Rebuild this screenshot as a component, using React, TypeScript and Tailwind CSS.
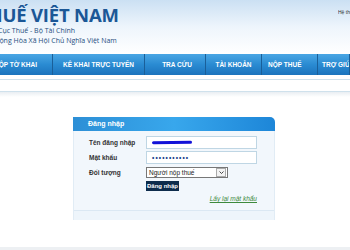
import React from 'react';

const navItems = [
  { label: 'NỘP TỜ KHAI', w: 'w-[53px] justify-end pr-[15px]' },
  { label: 'KÊ KHAI TRỰC TUYẾN', w: 'w-[92px] justify-center' },
  { label: 'TRA CỨU', w: 'w-[61px] justify-center pl-[4px]' },
  { label: 'TÀI KHOẢN', w: 'w-[56px] justify-center' },
  { label: 'NỘP THUẾ', w: 'w-[56px] justify-start pl-[6px]' },
  { label: 'TRỢ GIÚP', w: 'flex-1 justify-start pl-[4px]' },
];

export default function App() {
  return (
    <div className="w-[350px] h-[250px] overflow-hidden bg-white flex flex-col font-['Liberation_Sans',Arial,sans-serif]">
      {/* header */}
      <div className="h-[54px] shrink-0 flex bg-gradient-to-b from-[#cbe0f3] via-[#eef5fc] to-white">
        <div className="flex-1 overflow-hidden pt-[4px]">
          <div className="-ml-[22px] whitespace-nowrap text-[18.5px] leading-[22px] font-bold text-[#1b5796] font-['Open_Sans',sans-serif] tracking-[-0.2px]">
            THUẾ VIỆT NAM
          </div>
          <div className="-ml-[20px] whitespace-nowrap text-[7px] leading-[9px] text-[#1f4f80] font-['Open_Sans',sans-serif]">
            Tổng Cục Thuế - Bộ Tài Chính
          </div>
          <div className="-ml-[5px] mt-[1px] whitespace-nowrap text-[7px] leading-[9px] text-[#1f4f80] font-['Open_Sans',sans-serif]">
            Cộng Hòa Xã Hội Chủ Nghĩa Việt Nam
          </div>
        </div>
        <div className="w-[12px] overflow-hidden whitespace-nowrap pt-[9px] text-[5px] text-[#333]">
          Hệ thống
        </div>
      </div>

      {/* nav */}
      <div className="h-[21px] shrink-0 flex bg-gradient-to-b from-[#49a6e4] via-[#2a8bd2] to-[#1b73bd]">
        {navItems.map((item, i) => (
          <div
            key={i}
            className={`${item.w} shrink-0 flex items-center overflow-hidden whitespace-nowrap border-r border-[#1a5f99] text-white text-[6.5px] font-bold`}
          >
            {item.label}
          </div>
        ))}
      </div>

      {/* sub strip */}
      <div className="h-[4px] shrink-0" />
      <div className="h-[13px] shrink-0 bg-white border-y border-[#cfe1ec]" />
      <div className="h-[5px] shrink-0 bg-gradient-to-b from-[#e9eef2] to-white" />

      {/* login box */}
      <div className="mt-[20px] ml-[73px] w-[202px] shrink-0">
        <div className="h-[14px] rounded-tr-[5px] bg-gradient-to-r from-[#2d8fd6] via-[#38a7ec] to-[#1d86d8] pl-[15px] flex items-center text-white text-[7px] font-bold">
          Đăng nhập
        </div>
        <div className="bg-[#f2f7fc] border-x border-[#e1ecf5]">
          <div className="pt-[5px] pl-[15px] flex flex-col gap-[2px]">
            <div className="flex items-center h-[13px]">
              <div className="w-[57px] text-[6.5px] font-bold text-[#333]">Tên đăng nhập</div>
              <div className="w-[111px] h-[13px] bg-white border border-[#bfd6e4] flex items-center pl-[5px]">
                <div className="w-[40px] h-[3px] rounded-full bg-[#1212d8] -rotate-1" />
              </div>
            </div>
            <div className="flex items-center h-[13px]">
              <div className="w-[57px] text-[6.5px] font-bold text-[#333]">Mật khẩu</div>
              <div className="w-[111px] h-[13px] bg-white border border-[#bfd6e4] flex items-center pl-[5px] text-[6.5px] tracking-[1.1px] text-[#1a3f8a] font-bold">
                •••••••••••
              </div>
            </div>
            <div className="flex items-center h-[11px] mt-[1px]">
              <div className="w-[57px] text-[6.5px] font-bold text-[#333]">Đối tượng</div>
              <div className="w-[82px] h-[11px] bg-white border border-[#777] flex items-center justify-between pl-[2px]">
                <span className="text-[6.5px] text-[#222]">Người nộp thuế</span>
                <span className="w-[10px] h-[9px] border border-[#aaa] bg-[#f3f3f3] mr-[1px] flex items-center justify-center">
                  <svg width="5" height="3" viewBox="0 0 5 3">
                    <path d="M0.5 0.5 L2.5 2.5 L4.5 0.5" fill="none" stroke="#333" strokeWidth="0.9" />
                  </svg>
                </span>
              </div>
            </div>
            <div className="flex mt-[1px]">
              <div className="w-[57px]" />
              <div className="h-[10px] px-[1px] bg-[#0e2c4c] text-white text-[6px] font-bold flex items-center">
                Đăng nhập
              </div>
            </div>
            <div className="flex justify-end pr-[17px] mt-[1px]">
              <span className="text-[6.5px] italic underline text-[#3d8a3d]">Lấy lại mật khẩu</span>
            </div>
          </div>
          <div className="mt-[6px] h-[10px] border-t border-[#dbe8f3] bg-[#eef5fb]" />
        </div>
      </div>

      <div className="flex-1" />
      <div className="h-[3px] shrink-0 bg-[#edf0f3]" />
    </div>
  );
}
